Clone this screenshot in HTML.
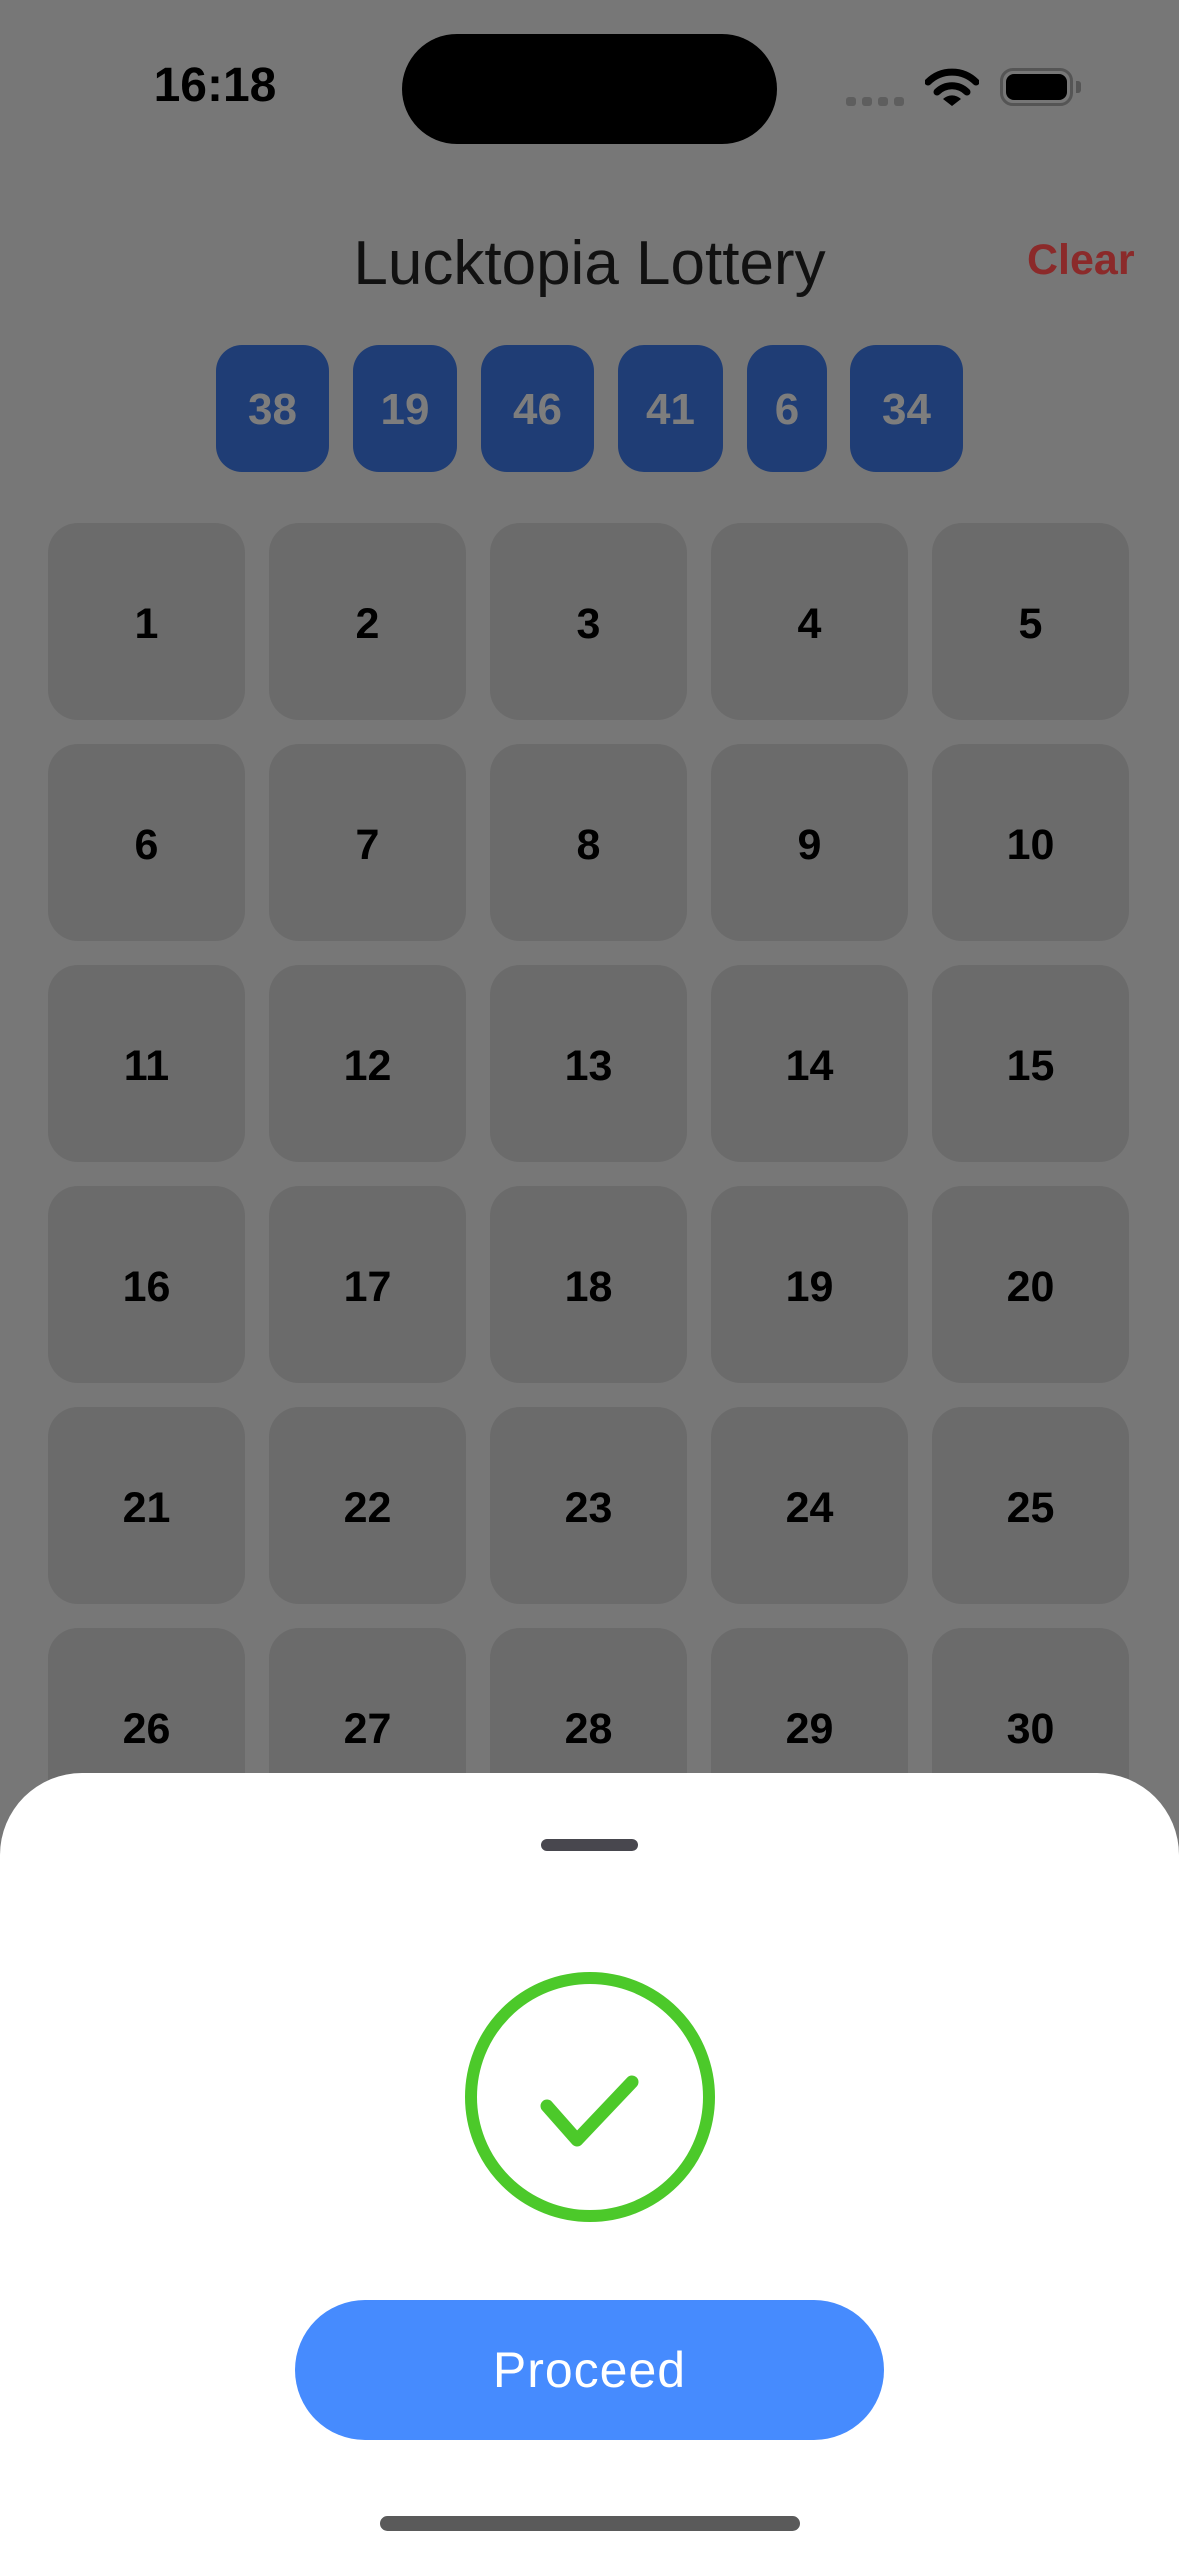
<!DOCTYPE html>
<html><head><meta charset="utf-8"><style>
*{margin:0;padding:0;box-sizing:border-box}
body{width:1179px;height:2556px;overflow:hidden;background:#777;font-family:"Liberation Sans",sans-serif;position:relative}
.a{position:absolute}
.cell{position:absolute;width:197px;height:197px;background:#6b6b6b;border-radius:30px;display:flex;align-items:center;justify-content:center;font-weight:bold;font-size:43px;color:#000;padding-top:6px}
.chip{position:absolute;top:345px;height:127px;background:#1f3d75;border-radius:26px;display:flex;align-items:center;justify-content:center;font-weight:bold;font-size:44px;color:#7d7d7d;padding-top:2px}
</style></head><body>
<div class="a" style="left:150px;top:58px;width:130px;text-align:center;font-size:48px;font-weight:bold;color:#000">16:18</div>
<div class="a" style="left:402px;top:34px;width:375px;height:110px;background:#000;border-radius:55px"></div>
<div class="a" style="left:846px;top:97px;width:10px;height:9px;background:#5e5e5e;border-radius:3px"></div>
<div class="a" style="left:862px;top:97px;width:10px;height:9px;background:#5e5e5e;border-radius:3px"></div>
<div class="a" style="left:878px;top:97px;width:10px;height:9px;background:#5e5e5e;border-radius:3px"></div>
<div class="a" style="left:894px;top:97px;width:10px;height:9px;background:#5e5e5e;border-radius:3px"></div>
<svg class="a" style="left:925px;top:66px" width="54" height="42" viewBox="0 0 54 42">
<path d="M3 16 A34 34 0 0 1 51 16" stroke="#000" stroke-width="7" fill="none" stroke-linecap="round"/>
<path d="M12 26 A21 21 0 0 1 42 26" stroke="#000" stroke-width="7" fill="none" stroke-linecap="round"/>
<path d="M18 33 L27 40 L36 33 A13 13 0 0 0 18 33Z" fill="#000"/></svg>
<div class="a" style="left:1000px;top:68px;width:73px;height:38px;border:3px solid #555;border-radius:13px"></div>
<div class="a" style="left:1006px;top:74px;width:61px;height:26px;background:#000;border-radius:8px"></div>
<div class="a" style="left:1076px;top:81px;width:5px;height:12px;background:#555;border-radius:0 3px 3px 0"></div>
<div class="a" style="left:0;top:228px;width:1179px;text-align:center;font-size:62px;color:#111">Lucktopia Lottery</div>
<div class="a" style="left:1027px;top:236px;font-size:43px;font-weight:bold;color:#8b2a2a">Clear</div>
<div class="chip" style="left:216px;width:113px">38</div>
<div class="chip" style="left:353px;width:104px">19</div>
<div class="chip" style="left:481px;width:113px">46</div>
<div class="chip" style="left:618px;width:105px">41</div>
<div class="chip" style="left:747px;width:80px">6</div>
<div class="chip" style="left:850px;width:113px">34</div>
<div id="g"></div>
<script>
var h='';for(var i=0;i<30;i++){var r=Math.floor(i/5),c=i%5;h+='<div class="cell" style="left:'+(48+c*221)+'px;top:'+(523+r*221)+'px">'+(i+1)+'</div>';}document.getElementById('g').innerHTML=h;
</script>
<div class="a" style="left:0;top:1773px;width:1179px;height:783px;background:#fff;border-radius:82px 82px 0 0"></div>
<div class="a" style="left:541px;top:1839px;width:97px;height:12px;background:#48474e;border-radius:6px"></div>
<svg class="a" style="left:463px;top:1970px" width="254" height="254" viewBox="0 0 254 254">
<circle cx="127" cy="127" r="119" stroke="#4cc92a" stroke-width="12" fill="none"/>
<path d="M84 136 L114 170 L169 112" stroke="#4cc92a" stroke-width="13" fill="none" stroke-linecap="round" stroke-linejoin="round"/></svg>
<div class="a" style="left:295px;top:2300px;width:589px;height:140px;background:#468bfe;border-radius:70px;color:#fff;font-size:50px;display:flex;align-items:center;justify-content:center;letter-spacing:1px">Proceed</div>
<div class="a" style="left:380px;top:2516px;width:420px;height:15px;background:#5a5a5a;border-radius:8px"></div>
</body></html>
